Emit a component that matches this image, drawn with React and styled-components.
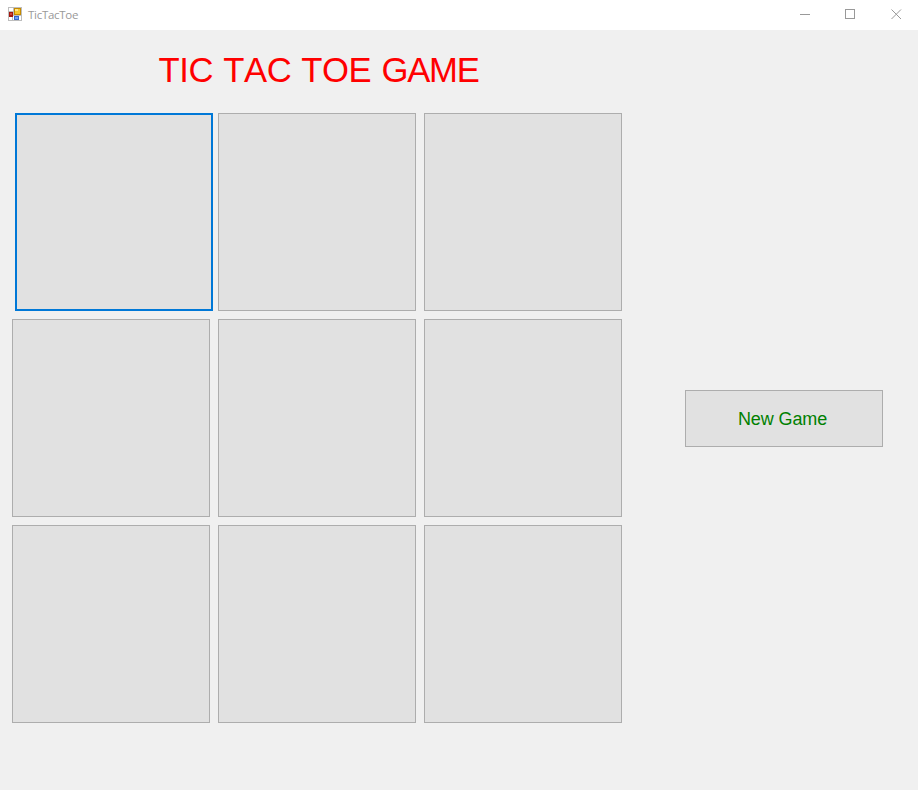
import React from 'react';
import styled, { createGlobalStyle } from 'styled-components';

const GlobalStyle = createGlobalStyle`
  *, *::before, *::after { box-sizing: border-box; }
  body { margin: 0; background: #f0f0f0; overflow: hidden; }
`;

const Window = styled.div`
  display: flex;
  flex-direction: column;
  width: 918px;
  height: 790px;
  background: #f0f0f0;
  font-family: "Liberation Sans", Arial, sans-serif;
`;

const TitleBar = styled.header`
  display: flex;
  align-items: center;
  height: 30px;
  padding-left: 8px;
  background: #fff;
`;

const AppIcon = styled.svg`
  display: block;
  width: 14px;
  height: 14px;
  margin-bottom: 2px;
`;

const WindowTitle = styled.span`
  flex: 1;
  margin-left: 6px;
  font: 11.5px/30px "Open Sans", sans-serif;
  letter-spacing: -0.28px;
  color: #999;
`;

const Controls = styled.div`
  display: flex;
  margin-right: -1px;
`;

const ControlButton = styled.button`
  display: flex;
  align-items: center;
  justify-content: center;
  width: ${(p) => p.$width || 46}px;
  height: 30px;
  padding: 0 0 1px;
  border: 0;
  background: transparent;
`;

const ControlIcon = styled.svg`
  display: block;
  width: 11px;
  height: 11px;
  fill: none;
  stroke: #999;
`;

const Client = styled.main`
  display: flex;
  flex: 1;
  padding-left: 12px;
`;

const Game = styled.section`
  width: 610px;
`;

const Heading = styled.h1`
  height: 83px;
  margin: 0;
  padding: 20px 0 0 146.5px;
  font-size: 34.67px;
  line-height: 40px;
  font-weight: 400;
  font-kerning: none;
  letter-spacing: -0.4px;
  word-spacing: 0.8px;
  white-space: nowrap;
  color: #f00;
`;

const TightWord = styled.span`
  letter-spacing: -1.2px;
`;

const Board = styled.div`
  display: grid;
  grid-template-columns: repeat(3, 198px);
  grid-auto-rows: 198px;
  gap: 8px;
`;

const Button = styled.button`
  padding: 0;
  border: 1px solid #adadad;
  border-radius: 0;
  background: #e1e1e1;
  font-family: inherit;
`;

const Cell = styled(Button)`
  width: 198px;
  height: 198px;
  ${(p) => p.$focused && 'margin-left: 3px; border: 2px solid #0078d7;'}
`;

const Side = styled.aside`
  padding: 360px 0 0 63px;
`;

const NewGame = styled(Button)`
  width: 198px;
  height: 57px;
  padding: 1px 3px 0 0;
  font-size: 18px;
  line-height: 20px;
  letter-spacing: -0.1px;
  color: #008000;
`;

const cells = Array.from({ length: 9 }, (_, i) => i);

export default function App() {
  return (
    <>
      <GlobalStyle />
      <Window>
        <TitleBar>
          <AppIcon viewBox="0 0 14 14" shapeRendering="crispEdges">
            <rect width="14" height="14" fill="#bdbdbd" />
            <rect x="1" y="1" width="4" height="3" fill="#fff" />
            <rect x="1" y="10" width="3" height="3" fill="#fff" />
            <rect x="5" y="9" width="8" height="4" fill="#fff" />
            <rect x="1" y="5" width="4" height="5" fill="#a3170f" />
            <rect x="2" y="6" width="2" height="2" fill="#d0483a" />
            <rect x="6" y="1" width="7" height="7" fill="#c58a00" />
            <rect x="7" y="2" width="5" height="5" fill="#f5c52c" />
            <rect x="7" y="2" width="3" height="2" fill="#ffe48a" />
            <rect x="6" y="9" width="5" height="4" fill="#3467cc" />
            <rect x="7" y="10" width="3" height="2" fill="#6fa0f5" />
          </AppIcon>
          <WindowTitle>TicTacToe</WindowTitle>
          <Controls>
            <ControlButton aria-label="Minimize">
              <ControlIcon viewBox="0 0 11 11"><path d="M0 5.5H10" /></ControlIcon>
            </ControlButton>
            <ControlButton aria-label="Maximize" $width={45}>
              <ControlIcon viewBox="0 0 11 11" shapeRendering="crispEdges"><path d="M.5 .5H9.5V9.5H.5Z" /></ControlIcon>
            </ControlButton>
            <ControlButton aria-label="Close">
              <ControlIcon viewBox="0 0 11 11"><path d="M.5 .5L10 10M10 .5L.5 10" /></ControlIcon>
            </ControlButton>
          </Controls>
        </TitleBar>
        <Client>
          <Game>
            <Heading>TIC TAC TOE <TightWord>GAME</TightWord></Heading>
            <Board>
              {cells.map((i) => (
                <Cell key={i} $focused={i === 0} aria-label={`Cell ${i + 1}`} />
              ))}
            </Board>
          </Game>
          <Side>
            <NewGame>New Game</NewGame>
          </Side>
        </Client>
      </Window>
    </>
  );
}
